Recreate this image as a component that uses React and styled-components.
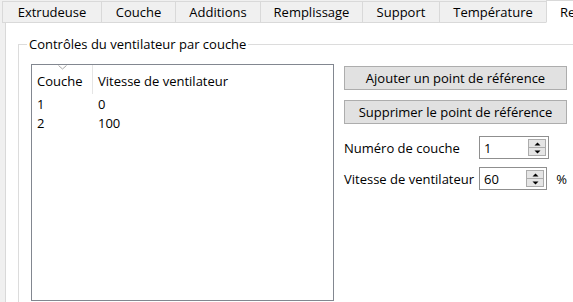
import React from 'react';
import styled, { createGlobalStyle } from 'styled-components';

const GlobalStyle = createGlobalStyle`
  html, body {
    margin: 0;
    padding: 0;
    background: #f0f0f0;
  }
  body {
    font-family: "Open Sans", "Noto Sans", sans-serif;
    font-size: 13px;
    color: #000;
  }
`;

const Window = styled.div`
  width: 573px;
  height: 302px;
  overflow: hidden;
  background: #f0f0f0;
  display: flex;
  flex-direction: column;
`;

const TabStrip = styled.div`
  display: flex;
  align-items: flex-end;
  height: 23px;
  padding-left: 2px;
  position: relative;
  z-index: 1;
  flex: none;
`;

const Tab = styled.div`
  flex: none;
  box-sizing: border-box;
  width: ${p => p.$w}px;
  height: ${p => (p.$active ? 23 : 22)}px;
  margin-left: -1px;
  border: 1px solid #d9d9d9;
  border-bottom-color: ${p => (p.$active ? '#fff' : '#d9d9d9')};
  background: ${p => (p.$active ? '#fff' : '#f0f0f0')};
  display: flex;
  align-items: center;
  justify-content: ${p => (p.$active ? 'flex-start' : 'center')};
  padding-left: ${p => (p.$active ? 13 : 0)}px;
  white-space: nowrap;
  line-height: 18px;
  &:first-child {
    margin-left: 0;
  }
`;

const Panel = styled.div`
  flex: 1;
  margin-top: -1px;
  margin-left: 5px;
  width: 600px;
  background: #fff;
  border: 1px solid #d9d9d9;
  padding: 13px 0 0 12px;
`;

const GroupBox = styled.fieldset`
  margin: 0;
  width: 600px;
  height: 300px;
  border: 1px solid #dcdcdc;
  padding: 12px 0 0 12px;
  min-width: 0;
`;

const GroupTitle = styled.legend`
  padding: 0 2px;
  margin-left: -4px;
  line-height: 16px;
`;

const Content = styled.div`
  display: flex;
  gap: 10px;
  align-items: flex-start;
`;

const ListView = styled.div`
  box-sizing: border-box;
  width: 303px;
  height: 237px;
  border: 1px solid #828790;
  background: #fff;
`;

const ListRow = styled.div`
  display: grid;
  grid-template-columns: 61px 1fr;
  height: ${p => (p.$header ? 29 : 19)}px;
  align-items: center;
  line-height: 18px;
`;

const HeaderCell = styled.div`
  position: relative;
  box-sizing: border-box;
  height: 100%;
  display: flex;
  align-items: center;
  padding: 3px 0 0 5px;
  border-right: ${p => (p.$divider ? '1px solid #e5e5e5' : 'none')};
`;

const SortArrow = styled.svg`
  position: absolute;
  top: 0;
  left: 26px;
`;

const Cell = styled.div`
  padding-left: 5px;
`;

const SideColumn = styled.div`
  width: 223px;
  margin-top: 2px;
  display: flex;
  flex-direction: column;
`;

const Button = styled.button`
  box-sizing: border-box;
  height: 24px;
  width: 100%;
  margin: 0 0 10px 0;
  padding: 0;
  background: #e1e1e1;
  border: 1px solid #adadad;
  font: inherit;
  color: #000;
  line-height: 18px;
`;

const FieldRow = styled.div`
  display: flex;
  align-items: center;
  height: 23px;
  margin-top: ${p => (p.$first ? 2 : 8)}px;
`;

const FieldLabel = styled.span`
  width: 135px;
  flex: none;
  white-space: nowrap;
  line-height: 18px;
`;

const SpinBox = styled.div`
  box-sizing: border-box;
  width: 70px;
  height: 23px;
  border: 1px solid #8f8f8f;
  background: #fff;
  display: flex;
  align-items: center;
  padding: 0 2px 0 4px;
`;

const SpinValue = styled.span`
  flex: 1;
  line-height: 18px;
`;

const SpinButtons = styled.div`
  width: 18px;
  height: 17px;
  display: flex;
  flex-direction: column;
`;

const SpinButton = styled.div`
  box-sizing: border-box;
  flex: 1;
  border: 1px solid #acacac;
  margin-top: ${p => (p.$down ? -1 : 0)}px;
  background: #e5e5e5;
  display: flex;
  align-items: center;
  justify-content: center;
`;

const Unit = styled.span`
  margin-left: 9px;
  line-height: 18px;
`;

const tabs = [
  ['Extrudeuse', 100],
  ['Couche', 75],
  ['Additions', 86],
  ['Remplissage', 103],
  ['Support', 78],
  ['Température', 108],
];

const rows = [
  ['1', '0'],
  ['2', '100'],
];

function Triangle({ up }) {
  return (
    <svg width="7" height="4" viewBox="0 0 7 4">
      <path d={up ? 'M0.5 3.5 L3.5 0.5 L6.5 3.5 Z' : 'M0.5 0.5 L3.5 3.5 L6.5 0.5 Z'} fill="#000" />
    </svg>
  );
}

function Spinner({ value }) {
  return (
    <SpinBox>
      <SpinValue>{value}</SpinValue>
      <SpinButtons>
        <SpinButton><Triangle up /></SpinButton>
        <SpinButton $down><Triangle /></SpinButton>
      </SpinButtons>
    </SpinBox>
  );
}

export default function App() {
  return (
    <Window>
      <GlobalStyle />
      <TabStrip>
        {tabs.map(([label, w]) => (
          <Tab key={label} $w={w}>{label}</Tab>
        ))}
        <Tab $w={120} $active>Refroidissement</Tab>
      </TabStrip>
      <Panel>
        <GroupBox>
          <GroupTitle>Contrôles du ventilateur par couche</GroupTitle>
          <Content>
            <ListView>
              <ListRow $header>
                <HeaderCell $divider>
                  <SortArrow width="9" height="5" viewBox="0 0 9 5">
                    <path d="M0.5 0.5 L4.5 4 L8.5 0.5" fill="none" stroke="#a6a6a6" strokeWidth="1" />
                  </SortArrow>
                  Couche
                </HeaderCell>
                <HeaderCell>Vitesse de ventilateur</HeaderCell>
              </ListRow>
              {rows.map(([layer, speed]) => (
                <ListRow key={layer}>
                  <Cell>{layer}</Cell>
                  <Cell>{speed}</Cell>
                </ListRow>
              ))}
            </ListView>
            <SideColumn>
              <Button>Ajouter un point de référence</Button>
              <Button>Supprimer le point de référence</Button>
              <FieldRow $first>
                <FieldLabel>Numéro de couche</FieldLabel>
                <Spinner value="1" />
              </FieldRow>
              <FieldRow>
                <FieldLabel>Vitesse de ventilateur</FieldLabel>
                <Spinner value="60" />
                <Unit>%</Unit>
              </FieldRow>
            </SideColumn>
          </Content>
        </GroupBox>
      </Panel>
    </Window>
  );
}
